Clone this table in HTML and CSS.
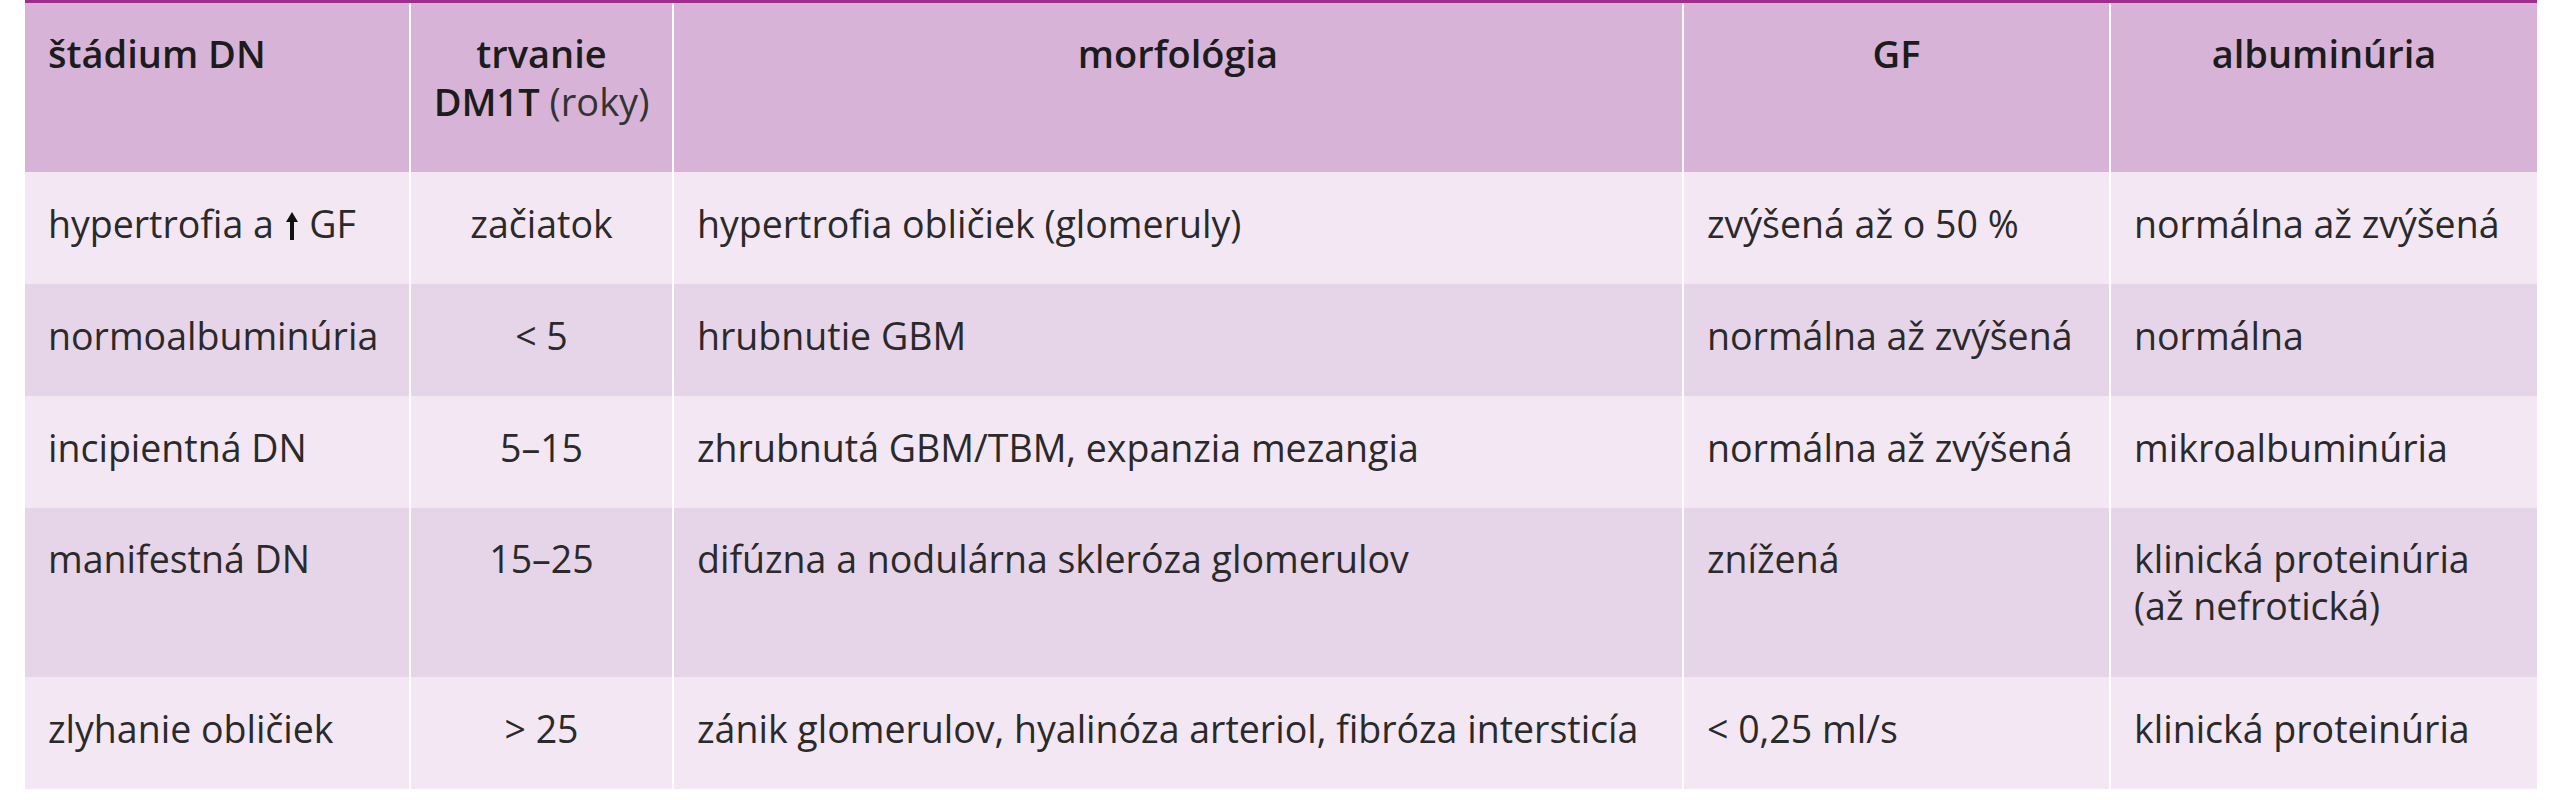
FILE: index.html
```html
<!DOCTYPE html>
<html lang="sk">
<head>
<meta charset="utf-8">
<title>Štádiá diabetickej nefropatie</title>
<link rel="stylesheet" href="styles.css">
</head>
<body>
<table class="dn-table">
  <colgroup>
    <col class="c1"><col class="c2"><col class="c3"><col class="c4"><col class="c5">
  </colgroup>
  <thead>
    <tr>
      <th class="left">štádium DN</th>
      <th class="narrow">trvanie<br>DM1T <span class="light">(roky)</span></th>
      <th>morfológia</th>
      <th>GF</th>
      <th>albuminúria</th>
    </tr>
  </thead>
  <tbody>
    <tr class="odd">
      <td>hypertrofia a <svg class="arrow" viewBox="0 0 12 28" width="12" height="28" aria-label="↑"><path d="M6 0 L12 10 L8 10 L8 28 L4 28 L4 10 L0 10 Z" fill="#111"/></svg> GF</td>
      <td class="center">začiatok</td>
      <td>hypertrofia obličiek (glomeruly)</td>
      <td>zvýšená až o 50 %</td>
      <td>normálna až zvýšená</td>
    </tr>
    <tr class="even">
      <td>normoalbuminúria</td>
      <td class="center">&lt; 5</td>
      <td>hrubnutie GBM</td>
      <td>normálna až zvýšená</td>
      <td>normálna</td>
    </tr>
    <tr class="odd">
      <td>incipientná DN</td>
      <td class="center">5–15</td>
      <td>zhrubnutá GBM/TBM, expanzia mezangia</td>
      <td>normálna až zvýšená</td>
      <td>mikroalbuminúria</td>
    </tr>
    <tr class="even tall">
      <td>manifestná DN</td>
      <td class="center">15–25</td>
      <td>difúzna a nodulárna skleróza glomerulov</td>
      <td>znížená</td>
      <td>klinická proteinúria<br>(až nefrotická)</td>
    </tr>
    <tr class="odd">
      <td>zlyhanie obličiek</td>
      <td class="center">&gt; 25</td>
      <td>zánik glomerulov, hyalinóza arteriol, fibróza intersticía</td>
      <td>&lt; 0,25 ml/s</td>
      <td>klinická proteinúria</td>
    </tr>
  </tbody>
</table>
</body>
</html>
```

FILE: styles.css
```css
html, body {
  margin: 0;
  padding: 0;
  background: #ffffff;
}

body {
  font-family: "Open Sans", "Noto Sans", "Liberation Sans", sans-serif;
  font-size: 37.5px;
  line-height: 47px;
  color: #2a2a2a;
}

.dn-table {
  margin-left: 25px;
  width: 2512px;
  table-layout: fixed;
  border-collapse: collapse;
  border-top: 3px solid #a02c8e;
}

.c1 { width: 385px; }
.c2 { width: 263px; }
.c3 { width: 1010px; }
.c4 { width: 427px; }
.c5 { width: 427px; }

.dn-table th,
.dn-table td {
  padding: 28px 23px 37px 23px;
  vertical-align: top;
  border-left: 2px solid #ffffff;
  text-align: left;
}

.dn-table th:first-child,
.dn-table td:first-child {
  border-left: none;
}

.dn-table thead tr {
  background: #d7b4d7;
}

.dn-table th {
  font-size: 38px;
  line-height: 48px;
  font-weight: 600;
  color: #1c1c1c;
  text-align: center;
  white-space: nowrap;
  padding-top: 26px;
  padding-bottom: 47px;
}

.dn-table th.narrow {
  padding-left: 8px;
  padding-right: 8px;
}

.dn-table th.left {
  text-align: left;
}

.light {
  font-weight: 400;
  color: #333333;
}

.odd {
  background: #f2e7f3;
}

.even {
  background: #e6d4e8;
}

.tall td {
  padding-top: 27px;
  padding-bottom: 48px;
}

.center {
  text-align: center !important;
}

.arrow {
  display: inline-block;
  vertical-align: -2px;
  margin: 0 2px;
}
```
